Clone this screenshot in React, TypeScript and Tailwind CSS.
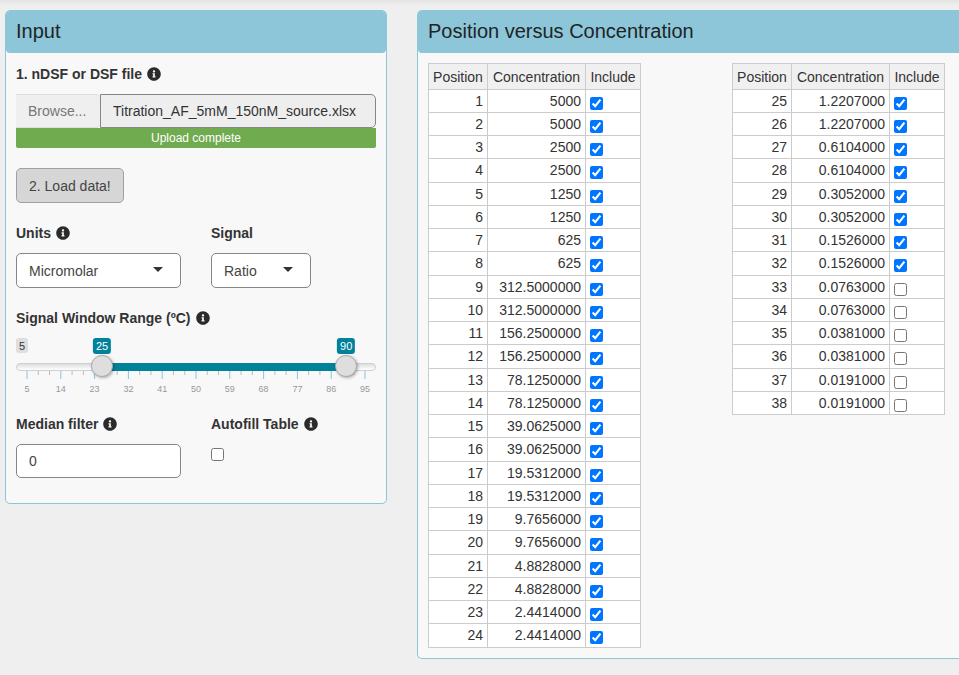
import { useState, type ReactNode } from "react";
import { FaInfoCircle } from "react-icons/fa";

type Row = { position: number; concentration: string; include: boolean };

const VALUES = [
  "5000", "5000", "2500", "2500", "1250", "1250", "625", "625",
  "312.5000000", "312.5000000", "156.2500000", "156.2500000",
  "78.1250000", "78.1250000", "39.0625000", "39.0625000",
  "19.5312000", "19.5312000", "9.7656000", "9.7656000",
  "4.8828000", "4.8828000", "2.4414000", "2.4414000",
  "1.2207000", "1.2207000", "0.6104000", "0.6104000",
  "0.3052000", "0.3052000", "0.1526000", "0.1526000",
  "0.0763000", "0.0763000", "0.0381000", "0.0381000",
  "0.0191000", "0.0191000",
];

const ROWS: Row[] = VALUES.map((concentration, i) => ({
  position: i + 1,
  concentration,
  include: i < 32,
}));

const MIN = 5;
const MAX = 95;
const TICK_LABELS = [5, 14, 23, 32, 41, 50, 59, 68, 77, 86, 95];
const TICKS = Array.from({ length: 31 }, (_, i) => i);

function Info() {
  return <FaInfoCircle className="size-[14px] shrink-0 text-[#2b2b2b]" aria-hidden="true" />;
}

function FieldLabel({ htmlFor, info, children }: { htmlFor: string; info?: boolean; children: ReactNode }) {
  return (
    <label htmlFor={htmlFor} className="mb-[10px] flex items-center gap-[5px] font-bold leading-5">
      {children}
      {info && <Info />}
    </label>
  );
}

function SelectBox({ id, options }: { id: string; options: string[] }) {
  return (
    <div className="relative">
      <select
        id={id}
        className="block h-[35px] w-full appearance-none rounded-[5px] border border-[#868686] bg-white px-3 text-[#444]"
      >
        {options.map((o) => (
          <option key={o}>{o}</option>
        ))}
      </select>
      <svg
        className="pointer-events-none absolute right-[18px] top-[14px] h-[5px] w-[10px] text-[#333]"
        viewBox="0 0 10 5"
        aria-hidden="true"
      >
        <path d="M0 0h10L5 5z" fill="currentColor" />
      </svg>
    </div>
  );
}

const RANGE =
  "pointer-events-none absolute left-0 top-[17px] h-[22px] w-full appearance-none bg-transparent " +
  "[&::-webkit-slider-thumb]:pointer-events-auto [&::-webkit-slider-thumb]:size-[22px] [&::-webkit-slider-thumb]:appearance-none " +
  "[&::-webkit-slider-thumb]:rounded-full [&::-webkit-slider-thumb]:border [&::-webkit-slider-thumb]:border-[#ababab] " +
  "[&::-webkit-slider-thumb]:bg-[#dedede] [&::-webkit-slider-thumb]:shadow-[1px_1px_3px_rgba(0,0,0,0.3)]";

function RangeSlider() {
  const [low, setLow] = useState(25);
  const [high, setHigh] = useState(90);
  const pct = (v: number) => ((v - MIN) / (MAX - MIN)) * 100;

  return (
    <div className="relative">
      <div className="relative mx-[11px] h-[25px] text-[11px] leading-4">
        <span className="absolute -left-[11px] top-0 h-[15px] rounded-[3px] bg-[#dedede] px-[3px] text-[#333]">5</span>
        <span
          className="absolute top-0 -translate-x-1/2 rounded-[3px] bg-[#00829b] px-[3px] text-white"
          style={{ left: `${pct(low)}%` }}
        >
          {low}
        </span>
        <span
          className="absolute top-0 -translate-x-1/2 rounded-[3px] bg-[#00829b] px-[3px] text-white"
          style={{ left: `${pct(high)}%` }}
        >
          {high}
        </span>
      </div>
      <div className="h-2 rounded-full border border-[#cfcfcf] bg-linear-to-b from-[#dedede] to-white px-[10px]">
        <div
          className="-my-px h-2 bg-[#00829b]"
          style={{ marginLeft: `${pct(low)}%`, width: `${pct(high) - pct(low)}%` }}
        />
      </div>
      <div className="mx-[11px]">
        <svg className="block h-2 w-full overflow-visible" aria-hidden="true">
          {TICKS.map((i) => (
            <line
              key={i}
              x1={`${(i / 30) * 100}%`}
              x2={`${(i / 30) * 100}%`}
              y1="0"
              y2={i % 3 === 0 ? 8 : 4}
              stroke={i % 3 === 0 ? "#8fc1de" : "#b9bcbe"}
              strokeWidth="1"
            />
          ))}
        </svg>
        <div className="mt-1 flex justify-between text-[9px] leading-3 text-[#999]">
          {TICK_LABELS.map((t) => (
            <span key={t} className="flex w-0 justify-center">
              {t}
            </span>
          ))}
        </div>
      </div>
      <input
        id="window-low"
        type="range"
        min={MIN}
        max={MAX}
        value={low}
        onChange={(e) => setLow(Math.min(Number(e.target.value), high))}
        className={RANGE}
      />
      <input
        aria-label="Signal window upper limit"
        type="range"
        min={MIN}
        max={MAX}
        value={high}
        onChange={(e) => setHigh(Math.max(Number(e.target.value), low))}
        className={RANGE}
      />
    </div>
  );
}

function ConcentrationTable({ rows }: { rows: Row[] }) {
  return (
    <table className="w-[213px] table-fixed border-collapse bg-white text-[#333]">
      <colgroup>
        <col className="w-[59px]" />
        <col className="w-[98px]" />
        <col />
      </colgroup>
      <thead>
        <tr className="h-[26px] bg-[#f0f0f0]">
          {["Position", "Concentration", "Include"].map((h) => (
            <th key={h} scope="col" className="border border-[#ccc] p-0 text-center font-normal leading-6">
              {h}
            </th>
          ))}
        </tr>
      </thead>
      <tbody>
        {rows.map((r) => (
          <tr key={r.position} className="h-[23px] nth-[4n]:h-6">
            <td className="border border-[#ccc] px-1 py-0 text-right align-top leading-[22px]">{r.position}</td>
            <td className="border border-[#ccc] px-1 py-0 text-right align-top leading-[22px]">{r.concentration}</td>
            <td className="border border-[#ccc] px-1 py-0 align-top">
              <input
                type="checkbox"
                defaultChecked={r.include}
                aria-label={`Include position ${r.position}`}
                className="mt-[7px] block size-[13px]"
              />
            </td>
          </tr>
        ))}
      </tbody>
    </table>
  );
}

export default function App() {
  return (
    <div className="min-h-screen bg-[#efefef] font-['Liberation_Sans',Arial,sans-serif] text-[14px] leading-5 text-[#333]">
      <div className="h-[10px] bg-linear-to-b from-[#e4e4e4] to-[#efefef] to-60%" />
      <main className="grid grid-cols-[382px_minmax(0,1fr)] items-start gap-[30px] pl-[5px]">
        <section className="rounded-[5px] border border-[#8cc6d8] bg-[#f8f8f8]">
          <h2 className="rounded-[4px] bg-[#8cc6d8] px-[10px] pb-[2px] text-[20px] leading-10 text-[#1f2426]">Input</h2>
          <form className="px-[10px] pt-[11px] pb-[25px]" onSubmit={(e) => e.preventDefault()}>
            <FieldLabel htmlFor="file" info>
              1. nDSF or DSF file
            </FieldLabel>
            <div className="flex h-[34px]">
              <label className="relative flex w-[84px] shrink-0 items-center rounded-r-[4px] border-y border-[#ddd] bg-[#efefef] pl-3 text-[#777]">
                Browse...
                <input id="file" type="file" className="sr-only" />
              </label>
              <input
                type="text"
                readOnly
                aria-label="Selected file"
                value="Titration_AF_5mM_150nM_source.xlsx"
                className="min-w-0 flex-1 rounded-r-[5px] border border-[#868686] bg-[#eee] px-3 text-[#333]"
              />
            </div>
            <div className="mb-5 h-5 rounded-b-[2px] bg-[#70ab50] text-center text-[12px] leading-5 text-white">
              Upload complete
            </div>
            <button
              type="submit"
              className="mb-5 block h-[35px] rounded-[5px] border border-[#a0a0a0] bg-[#d6d6d6] px-3 text-[#444]"
            >
              2. Load data!
            </button>
            <div className="mb-5 grid grid-cols-2 gap-[30px]">
              <div>
                <FieldLabel htmlFor="units" info>
                  Units
                </FieldLabel>
                <SelectBox id="units" options={["Micromolar", "Millimolar", "Nanomolar"]} />
              </div>
              <div>
                <FieldLabel htmlFor="signal">Signal</FieldLabel>
                <div className="w-[100px]">
                  <SelectBox id="signal" options={["Ratio", "330nm", "350nm"]} />
                </div>
              </div>
            </div>
            <FieldLabel htmlFor="window-low" info>
              Signal Window Range (ºC)
            </FieldLabel>
            <RangeSlider />
            <div className="mt-[19px] grid grid-cols-2 gap-[30px]">
              <div>
                <FieldLabel htmlFor="median" info>
                  Median filter
                </FieldLabel>
                <input
                  id="median"
                  type="text"
                  inputMode="numeric"
                  defaultValue="0"
                  className="block h-[34px] w-full rounded-[5px] border border-[#868686] bg-white px-3 text-[#444]"
                />
              </div>
              <div>
                <FieldLabel htmlFor="autofill" info>
                  Autofill Table
                </FieldLabel>
                <input id="autofill" type="checkbox" className="mt-[14px] block size-[13px]" />
              </div>
            </div>
          </form>
        </section>

        <section className="rounded-l-[5px] border border-r-0 border-[#8cc6d8] bg-[#f8f8f8]">
          <h2 className="rounded-l-[4px] bg-[#8cc6d8] px-[10px] pb-[2px] text-[20px] leading-10 text-[#1f2426]">
            Position versus Concentration
          </h2>
          <div className="grid grid-cols-[304px_minmax(0,1fr)] items-start p-[10px]">
            <ConcentrationTable rows={ROWS.slice(0, 24)} />
            <ConcentrationTable rows={ROWS.slice(24)} />
          </div>
        </section>
      </main>
    </div>
  );
}
